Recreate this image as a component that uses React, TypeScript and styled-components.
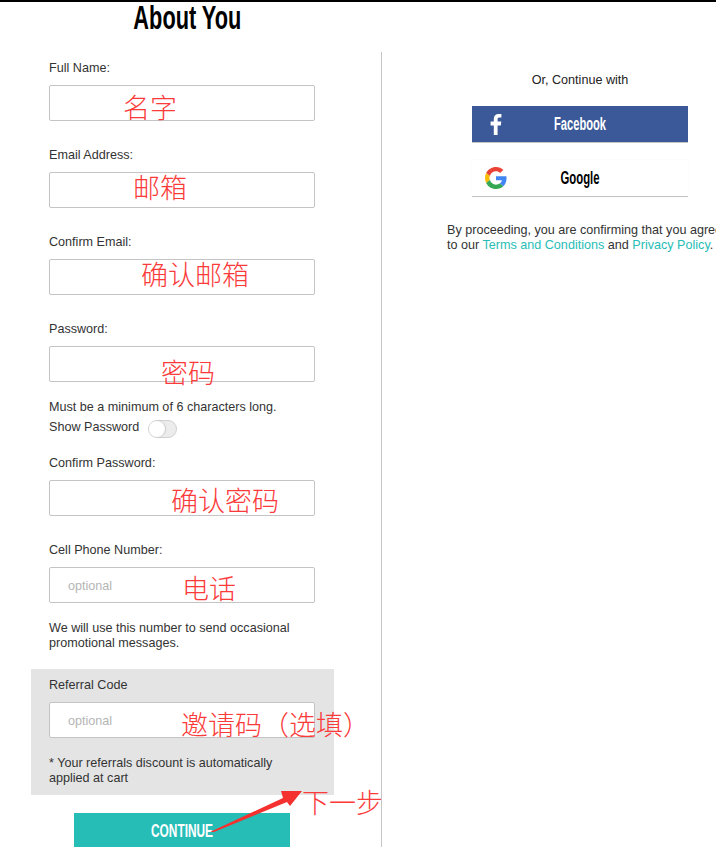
import * as React from 'react';
import styled, { createGlobalStyle } from 'styled-components';

const GlobalStyle = createGlobalStyle`
    html, body {
        margin: 0;
        padding: 0;
        height: 847px;
        overflow: hidden;
        background: #fff;
    }
    * {
        box-sizing: border-box;
    }
`;

const Page = styled.div`
    position: relative;
    width: 716px;
    height: 847px;
    border-top: 2px solid #000;
    font-family: "Liberation Sans", Arial, sans-serif;
    font-size: 12.6px;
    line-height: 15px;
    color: #333;
`;

// no condensed face is installed, so the display text is squeezed sideways
const Squeezed = styled.span<{ $scale: number }>`
    display: inline-block;
    transform: scaleX(${p => p.$scale});
    transform-origin: center;
`;

const Heading = styled.h1`
    width: 375px;
    height: 52px;
    margin: -2px 0 0;
    font-family: "Liberation Sans", sans-serif;
    font-size: 34px;
    font-weight: 700;
    line-height: 35px;
    text-align: center;
    color: #000;
`;

const Columns = styled.div`
    display: flex;
    width: 778px;
`;

const FormColumn = styled.div`
    flex: 0 0 382px;
    padding: 8px 0 0 49px;
    border-right: 1px solid #c4c4c4;
    height: 795px;
`;

const Field = styled.div<{ $gap?: number }>`
    width: 266px;
    margin-bottom: ${p => p.$gap ?? 26}px;
`;

const Label = styled.label`
    display: block;
    padding-top: 1px;
    margin-bottom: 9px;
`;

const Input = styled.input`
    display: block;
    width: 266px;
    height: 36px;
    padding: 2px 18px 0;
    border: 1px solid #c4c4c4;
    border-radius: 2px;
    background: #fff;
    font-family: inherit;
    font-size: 12.6px;
    &::placeholder {
        color: #b5b5b5;
        opacity: 1;
    }
`;

const Hint = styled.p`
    margin: 18px 0 0;
`;

const ToggleRow = styled.div`
    display: flex;
    align-items: flex-start;
    gap: 9px;
    margin: 5px 0 20px;
    height: 15px;
`;

const Toggle = styled.span`
    display: block;
    flex: none;
    width: 29px;
    height: 18px;
    border: 1px solid #d0d0d0;
    border-radius: 9px;
    background: #ececec;
    &::before {
        content: '';
        display: block;
        width: 16px;
        height: 16px;
        border-radius: 50%;
        background: #fff;
        box-shadow: 1px 0 1px rgba(0, 0, 0, 0.15);
    }
`;

const ReferralPanel = styled.div`
    width: 303px;
    height: 126px;
    margin: 18px 0 18px -18px;
    padding: 8px 19px 0 18px;
    background: #e4e4e4;
`;

const ContinueButton = styled.button`
    display: block;
    width: 216px;
    height: 38px;
    margin-left: 25px;
    padding: 0 0 2px;
    border: 0;
    background: #27bdb7;
    color: #fff;
    font-family: "Liberation Sans", sans-serif;
    font-size: 18px;
    font-weight: 700;
    text-transform: uppercase;
`;

const SocialColumn = styled.div`
    flex: 0 0 396px;
    padding-top: 21px;
`;

const OrLine = styled.p`
    margin: 0 0 18px;
    text-align: center;
    color: #222;
`;

const SocialButton = styled.button<{ $brand: 'facebook' | 'google' }>`
    position: relative;
    display: block;
    width: 216px;
    height: 37px;
    margin: 0 0 17px 90px;
    padding: 0;
    border: 0;
    border-bottom: 1px solid #c4c4c4;
    background: ${p => (p.$brand === 'facebook' ? '#3b5998' : '#fff')};
    color: ${p => (p.$brand === 'facebook' ? '#fff' : '#000')};
    box-shadow: ${p => (p.$brand === 'google' ? '0 0 2px rgba(0, 0, 0, 0.04)' : 'none')};
    font-family: "Liberation Sans", sans-serif;
    font-size: 18px;
    font-weight: 700;
`;

const BrandIcon = styled.svg`
    position: absolute;
    left: 13px;
    top: 7px;
    width: 22px;
    height: 22px;
`;

const Legal = styled.p`
    margin: 26px 0 0 65px;
    white-space: nowrap;
    color: #333;
`;

const LegalLink = styled.a`
    color: #27bdb7;
    text-decoration: none;
`;

const Annotation = styled.span<{ $x: number; $y: number }>`
    position: absolute;
    left: ${p => p.$x}px;
    top: ${p => p.$y}px;
    font-family: "Noto Sans CJK SC", sans-serif;
    font-size: 27px;
    font-weight: 300;
    line-height: 28px;
    white-space: nowrap;
    color: #fb3a3a;
    pointer-events: none;
`;

const Arrow = styled.svg`
    position: absolute;
    left: 205px;
    top: 783px;
    width: 100px;
    height: 50px;
`;

const notes = [
    { text: '名字', x: 123, y: 93 },
    { text: '邮箱', x: 133, y: 173 },
    { text: '确认邮箱', x: 141, y: 260 },
    { text: '密码', x: 161, y: 358 },
    { text: '确认密码', x: 171, y: 486 },
    { text: '电话', x: 182, y: 574 },
    { text: '邀请码（选填）', x: 181, y: 710 },
    { text: '下一步', x: 302, y: 788 },
];

export default function App() {
    return (
        <Page>
            <GlobalStyle />
            <Heading>
                <Squeezed $scale={0.64}>About You</Squeezed>
            </Heading>
            <Columns>
                <FormColumn>
                    <Field>
                        <Label>Full Name:</Label>
                        <Input />
                    </Field>
                    <Field>
                        <Label>Email Address:</Label>
                        <Input />
                    </Field>
                    <Field>
                        <Label>Confirm Email:</Label>
                        <Input />
                    </Field>
                    <Field $gap={0}>
                        <Label>Password:</Label>
                        <Input />
                        <Hint>Must be a minimum of 6 characters long.</Hint>
                        <ToggleRow>
                            Show Password
                            <Toggle />
                        </ToggleRow>
                    </Field>
                    <Field>
                        <Label>Confirm Password:</Label>
                        <Input />
                    </Field>
                    <Field $gap={0}>
                        <Label>Cell Phone Number:</Label>
                        <Input placeholder="optional" />
                        <Hint>We will use this number to send occasional promotional messages.</Hint>
                    </Field>
                    <ReferralPanel>
                        <Label>Referral Code</Label>
                        <Input placeholder="optional" />
                        <Hint>* Your referrals discount is automatically applied at cart</Hint>
                    </ReferralPanel>
                    <ContinueButton>
                        <Squeezed $scale={0.66}>Continue</Squeezed>
                    </ContinueButton>
                </FormColumn>
                <SocialColumn>
                    <OrLine>Or, Continue with</OrLine>
                    <SocialButton $brand="facebook">
                        <BrandIcon viewBox="0 0 22 22">
                            <path
                                fill="#fff"
                                d="M12.6 22v-9.6h3.2l.5-3.8h-3.7V6.300c0-1.100.3-1.800 1.800-1.800h2V1.100C16 1 14.900.9 13.600.9c-2.800 0-4.800 1.700-4.800 4.900v2.800H5.600v3.800h3.200V22z"
                            />
                        </BrandIcon>
                        <Squeezed $scale={0.62}>Facebook</Squeezed>
                    </SocialButton>
                    <SocialButton $brand="google">
                        <BrandIcon viewBox="0 0 48 48">
                            <path fill="#EA4335" d="M24 9.500c3.540 0 6.710 1.220 9.210 3.600l6.850-6.850C35.900 2.380 30.470 0 24 0 14.620 0 6.510 5.380 2.560 13.220l7.980 6.190C12.430 13.720 17.740 9.500 24 9.500z" />
                            <path fill="#4285F4" d="M46.980 24.550c0-1.570-.15-3.090-.38-4.550H24v9.020h12.940c-.58 2.960-2.260 5.480-4.780 7.180l7.730 6c4.510-4.180 7.090-10.360 7.090-17.650z" />
                            <path fill="#FBBC05" d="M10.530 28.590c-.48-1.450-.76-2.990-.76-4.590s.27-3.140.76-4.590l-7.980-6.190C.92 16.460 0 20.120 0 24c0 3.880.92 7.540 2.560 10.780l7.970-6.190z" />
                            <path fill="#34A853" d="M24 48c6.480 0 11.930-2.130 15.890-5.810l-7.730-6c-2.150 1.450-4.920 2.300-8.160 2.300-6.260 0-11.570-4.220-13.470-9.910l-7.980 6.190C6.510 42.620 14.620 48 24 48z" />
                        </BrandIcon>
                        <Squeezed $scale={0.63}>Google</Squeezed>
                    </SocialButton>
                    <Legal>
                        By proceeding, you are confirming that you agree
                        <br />
                        to our <LegalLink href="#">Terms and Conditions</LegalLink> and{' '}
                        <LegalLink href="#">Privacy Policy</LegalLink>.
                    </Legal>
                </SocialColumn>
            </Columns>
            {notes.map(n => (
                <Annotation key={n.text} $x={n.x} $y={n.y - 2}>
                    {n.text}
                </Annotation>
            ))}
            <Arrow viewBox="0 0 100 50">
                <polygon fill="#f5312f" points="5,47 78,13 76,6 97,6 85,21 82,17 9,47" />
            </Arrow>
        </Page>
    );
}
